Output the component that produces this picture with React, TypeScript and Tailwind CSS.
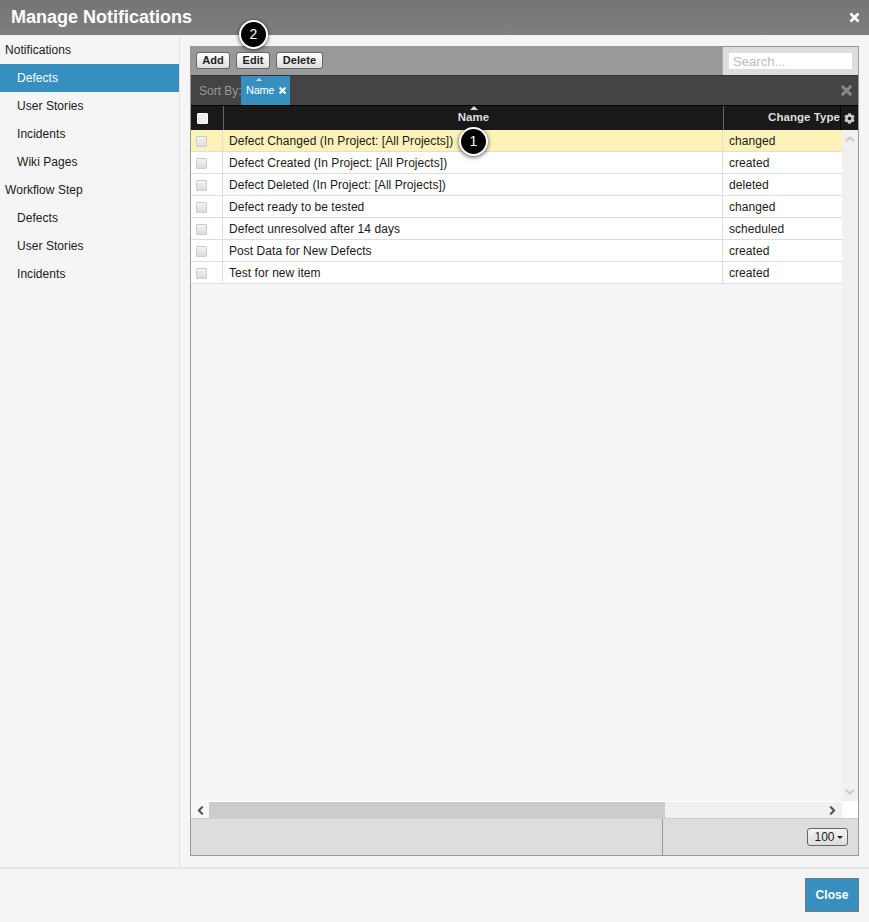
import { ChevronDown, ChevronLeft, ChevronRight, ChevronUp, X } from "lucide-react";
import { FaCog } from "react-icons/fa";

const sidebar = [
  { label: "Notifications", heading: true },
  { label: "Defects", active: true },
  { label: "User Stories" },
  { label: "Incidents" },
  { label: "Wiki Pages" },
  { label: "Workflow Step", heading: true },
  { label: "Defects" },
  { label: "User Stories" },
  { label: "Incidents" },
];

const rows = [
  { name: "Defect Changed (In Project: [All Projects])", type: "changed" },
  { name: "Defect Created (In Project: [All Projects])", type: "created" },
  { name: "Defect Deleted (In Project: [All Projects])", type: "deleted" },
  { name: "Defect ready to be tested", type: "changed" },
  { name: "Defect unresolved after 14 days", type: "scheduled" },
  { name: "Post Data for New Defects", type: "created" },
  { name: "Test for new item", type: "created" },
];

const SortArrow = () => (
  <span className="absolute top-[0px] left-1/2 -ml-[4px] h-0 w-0 border-x-[4px] border-b-[4px] border-x-transparent border-b-[#ddd]" />
);

const ToolButton = ({ label, width }: { label: string; width: string }) => (
  <button
    className={`flex h-[17px] items-center justify-center rounded-[3px] border border-[#666] bg-gradient-to-b from-white to-[#ddd] text-[11px] font-bold text-[#222] ${width}`}
  >
    {label}
  </button>
);

const Callout = ({ n, className }: { n: number; className: string }) => (
  <div
    className={`absolute flex h-[29px] w-[29px] items-center justify-center rounded-full border-2 border-white bg-black text-[14px] text-white shadow-[0_1px_4px_rgba(0,0,0,0.7)] ${className}`}
  >
    {n}
  </div>
);

const Checkbox = ({ light }: { light?: boolean }) => (
  <span
    className={`block h-[11px] w-[11px] rounded-[1px] border ${light ? "border-white bg-[#eee]" : "border-[#ccc] bg-gradient-to-b from-[#f4f4f4] to-[#ddd]"}`}
  />
);

export default function App() {
  return (
    <div className="relative flex h-[922px] w-[869px] flex-col overflow-hidden bg-[#f5f5f5] font-['Liberation_Sans',Arial,sans-serif] text-[12px] tracking-[0.05px] text-[#1a1a1a]">
      <header className="flex h-[35px] shrink-0 items-center justify-between bg-gradient-to-b from-[#757575] to-[#7f7f7f] pr-[8px] pl-[11px]">
        <h1 className="text-[18px] font-bold tracking-normal text-white">Manage Notifications</h1>
        <X className="h-[13px] w-[13px] text-white" strokeWidth={5} />
      </header>

      <div className="flex h-[832px] shrink-0">
        <nav className="w-[180px] shrink-0 border-r border-[#e2e2e2] pt-[1px]">
          {sidebar.map((item, i) => (
            <div
              key={i}
              className={`flex h-[28px] items-center ${item.heading ? "pl-[5px]" : "pl-[17px]"} ${item.active ? "bg-[#378fbf] text-white" : ""}`}
            >
              {item.label}
            </div>
          ))}
        </nav>

        <main className="mt-[11px] ml-[10px] flex h-[810px] w-[669px] flex-col border border-[#999] bg-[#f5f5f5]">
          <div className="flex h-[28px] shrink-0 bg-[#999]">
            <div className="flex flex-1 items-start gap-[6px] pt-[5px] pl-[5px]">
              <ToolButton label="Add" width="w-[34px]" />
              <ToolButton label="Edit" width="w-[34px]" />
              <ToolButton label="Delete" width="w-[47px]" />
            </div>
            <div className="flex w-[136px] items-center border-l border-[#aaa] bg-[#ddd] pl-[5px]">
              <div className="flex h-[18px] w-[125px] items-center border border-[#ddd] bg-white pt-[1px] pl-[4px] text-[13px] text-[#bbb]">
                Search...
              </div>
            </div>
          </div>

          <div className="flex h-[30px] shrink-0 items-stretch justify-between border-t border-[#333] bg-[#444]">
            <div className="flex items-stretch">
              <span className="flex w-[50px] items-center pl-[8px] tracking-normal whitespace-nowrap text-[#999]">Sort By:</span>
              <span className="relative flex w-[49px] items-center bg-[#378fbf] pl-[5px] text-[11px] tracking-[-0.3px] text-white">
                <span>Name</span>
                <X className="ml-[4px] h-[9px] w-[9px]" strokeWidth={6} />
                <span className="absolute top-[2px] left-[15px] h-0 w-0 border-x-[3px] border-b-[3px] border-x-transparent border-b-[#ddd]" />
              </span>
            </div>
            <span className="flex items-center pr-[4px]">
              <X className="h-[15px] w-[15px] text-[#888]" strokeWidth={5} />
            </span>
          </div>

          <div className="flex h-[25px] shrink-0 border-t border-black bg-[#191919] text-[11.5px] font-bold text-[#ddd]">
            <div className="flex w-[33px] shrink-0 items-center border-r border-[#666] pl-[6px]">
              <Checkbox light />
            </div>
            <div className="relative flex w-[499px] shrink-0 items-center justify-center">
              Name
              <SortArrow />
            </div>
            <div className="flex flex-1 items-center justify-end border-l border-[#666]">Change Type</div>
            <div className="flex w-[18px] shrink-0 items-center justify-center border-l border-black">
              <FaCog className="h-[11px] w-[11px] text-[#ccc]" />
            </div>
          </div>

          <div className="flex min-h-0 flex-1">
            <div className="flex-1">
              {rows.map((row, i) => (
                <div
                  key={row.name}
                  className={`flex h-[22px] border-b border-[#ddd] ${i === 0 ? "bg-[#fdf2b8]" : "bg-white"}`}
                >
                  <div className="flex w-[32px] shrink-0 items-center border-r border-[#ddd] pt-[1px] pl-[5px]">
                    <Checkbox />
                  </div>
                  <div className="flex w-[500px] shrink-0 items-center border-r border-[#ddd] pl-[6px]">{row.name}</div>
                  <div className="flex flex-1 items-center pl-[6px]">{row.type}</div>
                </div>
              ))}
            </div>
            <div className="flex w-[16px] shrink-0 flex-col items-center justify-between bg-[#f0f0f0] py-[2px]">
              <ChevronUp className="h-[14px] w-[14px] text-[#ccc]" strokeWidth={3.5} />
              <ChevronDown className="h-[14px] w-[14px] text-[#ccc]" strokeWidth={3.5} />
            </div>
          </div>

          <div className="flex h-[17px] shrink-0 items-center border-t border-white bg-[#f0f0f0]">
            <div className="flex h-full w-[18px] items-center justify-center bg-[#f7f7f7]">
              <ChevronLeft className="h-[13px] w-[13px] text-[#555]" strokeWidth={4} />
            </div>
            <div className="h-full w-[456px] bg-[#ccc]" />
            <div className="flex h-full flex-1 items-center justify-end pr-[3px]">
              <ChevronRight className="h-[13px] w-[13px] text-[#555]" strokeWidth={4} />
            </div>
            <div className="h-full w-[16px] bg-white" />
          </div>

          <div className="flex h-[37px] shrink-0 border-t border-[#ccc] bg-[#ddd]">
            <div className="w-[472px] border-r border-[#999]" />
            <div className="flex flex-1 items-center justify-end pr-[10px]">
              <button className="flex h-[18px] w-[41px] items-center justify-center gap-[2px] rounded-[3px] border border-[#666] bg-gradient-to-b from-[#f5f5f5] to-[#ddd] pl-[2px] text-[12px]">
                100
                <span className="h-0 w-0 border-x-[3px] border-t-[3px] border-x-transparent border-t-[#222]" />
              </button>
            </div>
          </div>
        </main>
      </div>

      <footer className="flex flex-1 justify-end border-t-2 border-[#e6e6e6] pt-[9px] pr-[10px]">
        <button className="flex h-[34px] w-[54px] items-center justify-center border border-[#777] bg-[#378fbf] text-[12px] font-bold text-white">
          Close
        </button>
      </footer>

      <Callout n={2} className="top-[20px] left-[239px]" />
      <Callout n={1} className="top-[127px] left-[459px]" />
    </div>
  );
}
